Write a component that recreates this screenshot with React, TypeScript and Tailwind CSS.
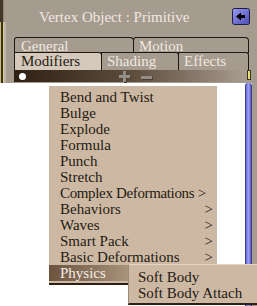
const menuItems: { label: string; sub?: boolean; inline?: boolean }[] = [
  { label: "Bend and Twist" },
  { label: "Bulge" },
  { label: "Explode" },
  { label: "Formula" },
  { label: "Punch" },
  { label: "Stretch" },
  { label: "Complex Deformations", sub: true, inline: true },
  { label: "Behaviors", sub: true },
  { label: "Waves", sub: true },
  { label: "Smart Pack", sub: true },
  { label: "Basic Deformations", sub: true },
];

function BackButton() {
  return (
    <svg width="18" height="17" viewBox="0 0 18 17" className="-mr-px">
      <defs>
        <linearGradient id="bb" x1="0" y1="0" x2="1" y2="1">
          <stop offset="0" stopColor="#9a9af0" />
          <stop offset="1" stopColor="#4c4cb4" />
        </linearGradient>
      </defs>
      <rect x="0.5" y="0.5" width="17" height="16" rx="2" fill="url(#bb)" stroke="#1c1c44" />
      <path d="M4 8.5 L9 4.5 L9 7 L13 7 L13 10 L9 10 L9 12.5 Z" fill="#000" />
    </svg>
  );
}

function PlusMinus() {
  return (
    <svg width="36" height="12" viewBox="0 0 36 12">
      <g fill="#4a3e34">
        <rect x="1" y="5" width="11" height="3" />
        <rect x="5" y="1" width="3" height="11" />
        <rect x="23" y="6" width="11" height="3" />
      </g>
      <g fill="#938e88">
        <rect x="0" y="4" width="11" height="3" />
        <rect x="4" y="0" width="3" height="11" />
        <rect x="22" y="5" width="11" height="3" />
      </g>
    </svg>
  );
}

export default function App() {
  return (
    <div className="relative flex h-[306px] w-[257px] flex-col overflow-hidden bg-white font-['Liberation_Serif',serif] text-[15px]">
      {/* header panel */}
      <div className="flex h-[83px] bg-[#a69b8f]">
        <div className="flex w-[6px] flex-col">
          <div className="flex h-[22px]">
            <div className="w-[3px] bg-[#43372c]" />
            <div className="w-px bg-[#8e8376]" />
          </div>
          <div className="flex flex-1">
            <div className="w-px bg-[#c9c070]" />
            <div className="w-[2px] bg-[#3a2f25]" />
            <div className="w-px bg-[#d8d080]" />
            <div className="w-[2px] bg-[#bdb4a8]" />
          </div>
        </div>

        <div className="flex flex-1 flex-col pl-[8px] pr-[8px]">
          <div className="flex h-[37px] items-center pb-[2px]">
            <span className="ml-[25px] text-[#efe8e0]">Vertex Object : Primitive</span>
            <div className="ml-auto pb-[2px]">
              <BackButton />
            </div>
          </div>

          <div className="flex h-[16px] leading-[17px] text-[#efe8e0]">
            <div className="w-[120px] rounded-tl-[3px] rounded-tr-[4px] border border-b-0 border-[#1e1712] pl-[6px]">
              General
            </div>
            <div className="-ml-px flex-1 rounded-tl-[3px] rounded-tr-[4px] border border-b-0 border-[#1e1712] pl-[5px]">
              Motion
            </div>
          </div>

          <div className="-mt-px flex h-[18px] leading-[17px] text-[#efe8e0]">
            <div className="w-[88px] rounded-tr-[3px] border border-b-0 border-[#1e1712] bg-[#d4c9bb] pl-[6px] text-[#1f1911]">
              Modifiers
            </div>
            <div className="-ml-px w-[78px] rounded-tr-[3px] border border-b-0 border-[#1e1712] pl-[5px]">
              Shading
            </div>
            <div className="-ml-px flex-1 rounded-tr-[3px] border border-b-0 border-[#1e1712] pl-[5px]">
              Effects
            </div>
          </div>

          <div className="flex h-[12px]">
            <div className="relative flex flex-1 items-center bg-linear-to-r from-[#2e2014] via-[#5c4c3c] to-[#a89c90]">
              <div className="ml-[5px] h-[7px] w-[7px] rounded-full bg-white" />
              <div className="ml-[93px] mt-[2px]">
                <PlusMinus />
              </div>
            </div>
            <div className="-mr-[2px] ml-[2px] h-[10px] w-[4px] border border-[#3a3420] bg-[#e6e070]" />
          </div>
        </div>
      </div>

      {/* body */}
      <div className="flex flex-1">
        <div className="flex-1 bg-white" />
        <div className="w-[7px] rounded-t-[3px] border-x border-[#3c3c88] bg-linear-to-r from-[#6a6ad8] via-[#a0a0f4] to-[#5858c0]" />
        <div className="w-[5px] bg-[#a69b8f]" />
      </div>

      {/* popup menu */}
      <div className="absolute left-[49px] top-[86px] w-[168px] border-b-2 border-[#2c2016] bg-[#cdb9a3] pb-[2px] pt-[3px] text-[#1f1a14]">
        {menuItems.map((it) => (
          <div
            key={it.label}
            className="flex h-[16px] items-center justify-between whitespace-nowrap pl-[11px] pr-[4px] leading-[16px]"
          >
            <span className={it.inline ? "tracking-[-0.35px]" : ""}>
              {it.label}
              {it.inline ? " >" : ""}
            </span>
            {it.sub && !it.inline ? <span>&gt;</span> : null}
          </div>
        ))}
        <div className="flex h-[16px] items-center bg-linear-to-r from-[#6b533d] via-[#ad9780] to-[#cdb9a3] pl-[11px] leading-[16px] text-[#f4eee6]">
          Physics
        </div>
      </div>

      {/* submenu */}
      <div className="absolute left-[128px] top-[264px] h-[41px] w-[129px] border-b-2 border-l border-t border-b-[#2c2016] border-l-[#9c8a78] border-t-[#e4d6c8] bg-[#cdb9a3] pt-[4px] text-[#1f1a14]">
        <div className="h-[16px] whitespace-nowrap pl-[9px] leading-[16px]">Soft Body</div>
        <div className="h-[16px] whitespace-nowrap pl-[9px] leading-[16px]">Soft Body Attach</div>
      </div>
    </div>
  );
}
